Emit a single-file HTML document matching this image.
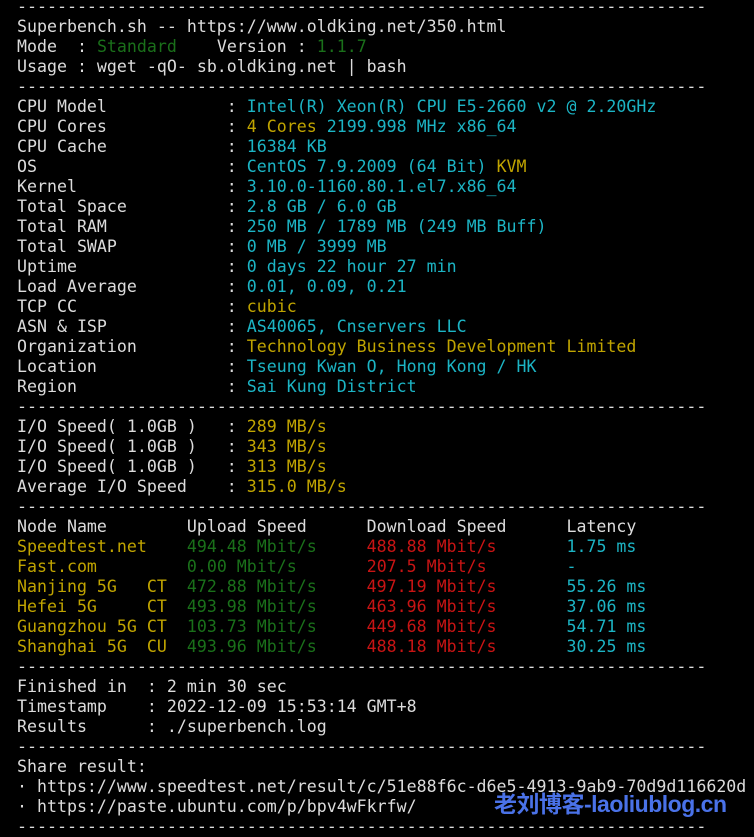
<!DOCTYPE html>
<html><head><meta charset="utf-8"><style>
html,body{margin:0;padding:0;background:#000;width:754px;height:837px;overflow:hidden}
pre{position:absolute;left:17px;top:-3px;margin:0;font-family:"DejaVu Sans Mono","Liberation Mono",monospace;font-size:16.6px;line-height:20px;color:#dcdcdc;white-space:pre}
.g{color:#1a701a}.y{color:#c0a400}.c{color:#1cb4c4}.r{color:#c81414}
.wm{position:absolute;left:494px;top:785px;font-family:"Liberation Sans","Noto Sans CJK SC",sans-serif;font-weight:bold;font-size:23px;color:#4a72e8;letter-spacing:-0.5px}
</style></head><body><pre>---------------------------------------------------------------------
Superbench.sh -- https://www.oldking.net/350.html
Mode  : <span class="g">Standard</span>    Version : <span class="g">1.1.7</span>
Usage : wget -qO- sb.oldking.net | bash
---------------------------------------------------------------------
CPU Model            : <span class="c">Intel(R) Xeon(R) CPU E5-2660 v2 @ 2.20GHz</span>
CPU Cores            : <span class="y">4 Cores</span> <span class="c">2199.998 MHz x86_64</span>
CPU Cache            : <span class="c">16384 KB</span>
OS                   : <span class="c">CentOS 7.9.2009 (64 Bit)</span> <span class="y">KVM</span>
Kernel               : <span class="c">3.10.0-1160.80.1.el7.x86_64</span>
Total Space          : <span class="c">2.8 GB / 6.0 GB</span>
Total RAM            : <span class="c">250 MB / 1789 MB (249 MB Buff)</span>
Total SWAP           : <span class="c">0 MB / 3999 MB</span>
Uptime               : <span class="c">0 days 22 hour 27 min</span>
Load Average         : <span class="c">0.01, 0.09, 0.21</span>
TCP CC               : <span class="y">cubic</span>
ASN &amp; ISP            : <span class="c">AS40065, Cnservers LLC</span>
Organization         : <span class="y">Technology Business Development Limited</span>
Location             : <span class="c">Tseung Kwan O, Hong Kong / HK</span>
Region               : <span class="c">Sai Kung District</span>
---------------------------------------------------------------------
I/O Speed( 1.0GB )   : <span class="y">289 MB/s</span>
I/O Speed( 1.0GB )   : <span class="y">343 MB/s</span>
I/O Speed( 1.0GB )   : <span class="y">313 MB/s</span>
Average I/O Speed    : <span class="y">315.0 MB/s</span>
---------------------------------------------------------------------
Node Name        Upload Speed      Download Speed      Latency
<span class="y">Speedtest.net</span>    <span class="g">494.48 Mbit/s</span>     <span class="r">488.88 Mbit/s</span>       <span class="c">1.75 ms</span>
<span class="y">Fast.com</span>         <span class="g">0.00 Mbit/s</span>       <span class="r">207.5 Mbit/s</span>        <span class="c">-</span>
<span class="y">Nanjing 5G   CT</span>  <span class="g">472.88 Mbit/s</span>     <span class="r">497.19 Mbit/s</span>       <span class="c">55.26 ms</span>
<span class="y">Hefei 5G     CT</span>  <span class="g">493.98 Mbit/s</span>     <span class="r">463.96 Mbit/s</span>       <span class="c">37.06 ms</span>
<span class="y">Guangzhou 5G CT</span>  <span class="g">103.73 Mbit/s</span>     <span class="r">449.68 Mbit/s</span>       <span class="c">54.71 ms</span>
<span class="y">Shanghai 5G  CU</span>  <span class="g">493.96 Mbit/s</span>     <span class="r">488.18 Mbit/s</span>       <span class="c">30.25 ms</span>
---------------------------------------------------------------------
Finished in  : 2 min 30 sec
Timestamp    : 2022-12-09 15:53:14 GMT+8
Results      : ./superbench.log
---------------------------------------------------------------------
Share result:
· https://www.speedtest.net/result/c/51e88f6c-d6e5-4913-9ab9-70d9d116620d
· https://paste.ubuntu.com/p/bpv4wFkrfw/
---------------------------------------------------------------------</pre>
<div class="wm">老刘博客-laoliublog.cn</div>
</body></html>
